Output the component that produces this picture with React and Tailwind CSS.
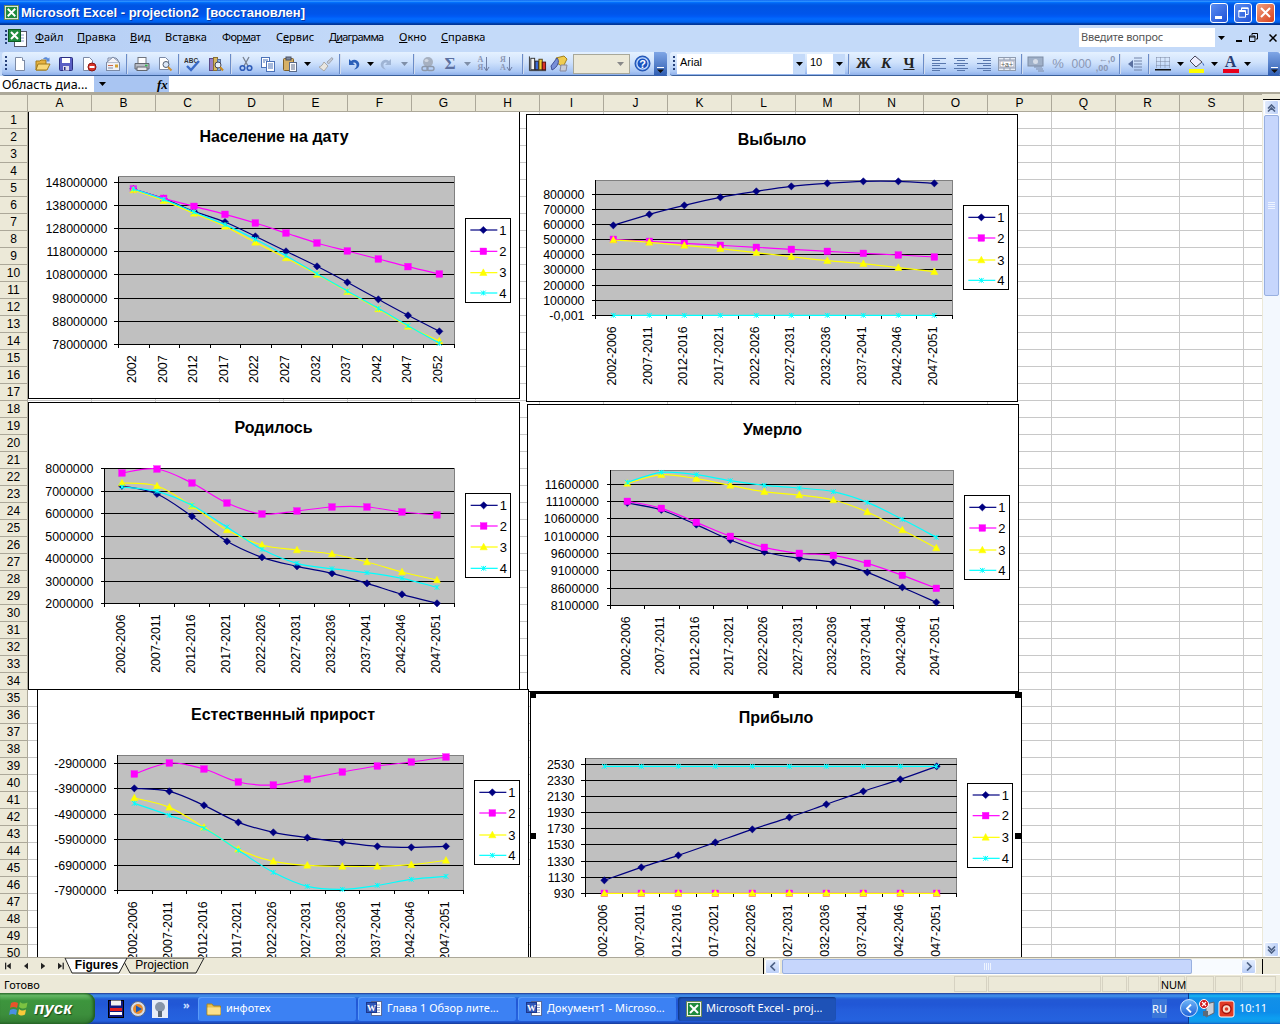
import React from "react";

const UI = "font-['Noto_Sans','DejaVu_Sans',sans-serif]";

function smooth(p) {
  let d = `M${p[0][0]} ${p[0][1]}`;
  for (let i = 0; i < p.length - 1; i++) {
    const a = p[i - 1] || p[i], b = p[i], c = p[i + 1], e = p[i + 2] || c;
    d += ` C${b[0] + (c[0] - a[0]) / 6} ${b[1] + (c[1] - a[1]) / 6} ${c[0] - (e[0] - b[0]) / 6} ${c[1] - (e[1] - b[1]) / 6} ${c[0]} ${c[1]}`;
  }
  return d;
}

function Marker({ k, x, y }) {
  if (k === 0) return <polygon points={`${x},${y - 3.6} ${x + 3.6},${y} ${x},${y + 3.6} ${x - 3.6},${y}`} fill="#000080" stroke="#000080" strokeWidth="0.5" />;
  if (k === 1) return <rect x={x - 3.3} y={y - 3.3} width="6.6" height="6.6" fill="#ff00ff" stroke="#ff00ff" strokeWidth="0.4" />;
  if (k === 2) return <polygon points={`${x},${y - 3.8} ${x + 3.6},${y + 2.8} ${x - 3.6},${y + 2.8}`} fill="#ffff00" stroke="#ffff00" strokeWidth="0.5" />;
  return <path d={`M${x - 2.4} ${y - 2.4}L${x + 2.4} ${y + 2.4}M${x + 2.4} ${y - 2.4}L${x - 2.4} ${y + 2.4}M${x} ${y - 2.4}V${y + 2.4}`} stroke="#00ffff" strokeWidth="1" fill="none" />;
}

const COL = ["#000080", "#ff00ff", "#ffff00", "#00ffff"];

function Chart({ className, px, py, ox, oy, title, titleX, titleY, plot, grid, labels, ticks, pts, series, legend, legendY, cats, labelRight }) {
  const X = (z) => ox + z / 3;
  const Y = (z) => oy + z / 3;
  const [x0, x1, y0, y1] = [X(plot[0]), X(plot[1]), Y(plot[2]), Y(plot[3])];
  const lx0 = X(legend[0]), lx1 = X(legend[1]), ly0 = Y(legend[2]), ly1 = Y(legend[3]);
  return (
    <div className={className}>
      <svg width="490" height="300" viewBox={`${px} ${py} 490 300`} className="block" fontFamily="'Liberation Sans',Arial,sans-serif">
        <text x={titleX} y={titleY} textAnchor="middle" fontSize="16" fontWeight="700" fill="#000">{title}</text>
        <rect x={x0} y={y0} width={x1 - x0} height={y1 - y0} fill="#c0c0c0" stroke="#808080" shapeRendering="crispEdges" />
        {grid.map((g, i) => (
          <g key={i} shapeRendering="crispEdges">
            <line x1={x0 - 4} x2={x1} y1={Y(g)} y2={Y(g)} stroke="#000" />
          </g>
        ))}
        <line x1={x0} x2={x0} y1={y0} y2={y1} stroke="#000" shapeRendering="crispEdges" />
        {ticks.map((t, i) => <line key={i} x1={X(t)} x2={X(t)} y1={y1} y2={y1 + 4} stroke="#000" shapeRendering="crispEdges" />)}
        {labels.map((l, i) => <text key={i} x={labelRight} y={Y(grid[i]) + 4.5} textAnchor="end" fontSize="12.4" fill="#000">{l}</text>)}
        {cats.map((c, i) => <text key={i} transform={`translate(${X(pts[i]) + 3} ${y1 + 11}) rotate(-90)`} textAnchor="end" fontSize="12.4" fill="#000">{c}</text>)}
        {series.map((s, k) => {
          const p = s.map((v, i) => [X(pts[i]), Y(v)]);
          return (
            <g key={k}>
              <path d={smooth(p)} fill="none" stroke={COL[k]} strokeWidth="1.2" />
              {p.map((q, i) => <Marker key={i} k={k} x={q[0]} y={q[1]} />)}
            </g>
          );
        })}
        <rect x={lx0} y={ly0} width={lx1 - lx0} height={ly1 - ly0} fill="#fff" stroke="#000" shapeRendering="crispEdges" />
        {legendY.map((z, k) => (
          <g key={k}>
            <line x1={lx0 + 5} x2={lx0 + 32} y1={Y(z)} y2={Y(z)} stroke={COL[k]} strokeWidth="1.2" />
            <Marker k={k} x={lx0 + 18} y={Y(z)} />
            <text x={lx0 + 34} y={Y(z) + 4.5} fontSize="13" fill="#000">{k + 1}</text>
          </g>
        ))}
      </svg>
    </div>
  );
}

const PER = ["2002-2006", "2007-2011", "2012-2016", "2017-2021", "2022-2026", "2027-2031", "2032-2036", "2037-2041", "2042-2046", "2047-2051"];
const YEARS = ["2002", "2007", "2012", "2017", "2022", "2027", "2032", "2037", "2042", "2047", "2052"];

const C1 = { px: 29, py: 111, ox: 20, oy: 110, title: "Население на дату", titleX: 274, titleY: 142, plot: [295, 1303, 200, 703], grid: [217, 286, 355, 424, 493, 565, 634, 703], labels: ["148000000", "138000000", "128000000", "118000000", "108000000", "98000000", "88000000", "78000000"], ticks: [296, 388, 478, 571, 661, 753, 844, 937, 1027, 1120, 1210, 1303], pts: [340, 431, 522, 615, 706, 798, 891, 982, 1075, 1164, 1258], series: [[237, 266, 304, 336, 379, 424, 469, 517, 568, 616, 664], [237, 265, 289, 313, 339, 369, 399, 423, 447, 470, 492], [240, 272, 310, 349, 397, 444, 493, 545, 597, 649, 693], [237, 268, 306, 344, 388, 437, 491, 543, 595, 647, 700]], legend: [1336, 1471, 326, 577], legendY: [360, 424, 488, 549], cats: YEARS, labelRight: 107.5 };
const C2 = { px: 527, py: 115, ox: 525, oy: 110, title: "Выбыло", titleX: 772, titleY: 145, plot: [212, 1282, 211, 616], grid: [253, 298, 343, 388, 433, 478, 526, 571, 616], labels: ["800000", "700000", "600000", "500000", "400000", "300000", "200000", "100000", "-0,001"], ticks: [212, 320, 424, 533, 641, 749, 854, 962, 1069, 1175, 1282], pts: [265, 373, 478, 586, 694, 799, 907, 1015, 1120, 1228], series: [[346, 313, 286, 262, 244, 229, 220, 214, 214, 220], [388, 394, 400, 406, 412, 418, 424, 430, 435, 441], [390, 397, 406, 416, 428, 440, 452, 461, 473, 485], [616, 616, 616, 616, 616, 616, 616, 616, 616, 616]], legend: [1315, 1450, 287, 538], legendY: [322, 384, 450, 511], cats: PER, labelRight: 584.5 };
const C3 = { px: 29, py: 403, ox: 25, oy: 400, title: "Родилось", titleX: 273.5, titleY: 433, plot: [239, 1288, 205, 610], grid: [205, 274, 340, 409, 475, 544, 610], labels: ["8000000", "7000000", "6000000", "5000000", "4000000", "3000000", "2000000"], ticks: [239, 343, 448, 553, 658, 763, 868, 973, 1078, 1183, 1288], pts: [291, 396, 501, 606, 711, 816, 921, 1026, 1131, 1236], series: [[258, 282, 349, 424, 472, 499, 520, 550, 583, 610], [219, 207, 249, 309, 342, 333, 321, 321, 336, 345], [249, 258, 318, 390, 435, 450, 462, 486, 516, 540], [261, 274, 316, 381, 448, 490, 506, 518, 535, 562]], legend: [1322, 1456, 281, 532], legendY: [316, 378, 441, 505], cats: PER, labelRight: 93.5 };
const C4 = { px: 528, py: 405, ox: 525, oy: 400, title: "Умерло", titleX: 772.5, titleY: 435, plot: [257, 1285, 211, 616], grid: [253, 304, 355, 409, 460, 511, 565, 616], labels: ["11600000", "11100000", "10600000", "10100000", "9600000", "9100000", "8600000", "8100000"], ticks: [257, 358, 464, 565, 667, 772, 874, 976, 1079, 1183, 1285], pts: [307, 409, 514, 616, 718, 823, 925, 1027, 1132, 1234], series: [[309, 330, 374, 420, 456, 475, 487, 517, 562, 607], [304, 325, 367, 409, 442, 460, 466, 490, 526, 565], [250, 224, 236, 256, 275, 285, 300, 336, 390, 444], [247, 217, 224, 242, 256, 264, 275, 307, 358, 412]], legend: [1318, 1453, 287, 538], legendY: [322, 384, 450, 511], cats: PER, labelRight: 599 };
const C5 = { px: 38, py: 690, ox: 30, oy: 685, title: "Естественный прирост", titleX: 283, titleY: 720, plot: [263, 1300, 211, 616], grid: [235, 310, 388, 463, 541, 616], labels: ["-2900000", "-3900000", "-4900000", "-5900000", "-6900000", "-7900000"], ticks: [263, 367, 469, 575, 676, 781, 885, 988, 1093, 1195, 1300], pts: [313, 418, 522, 625, 730, 832, 937, 1042, 1144, 1248], series: [[310, 319, 361, 412, 442, 458, 472, 484, 487, 484], [267, 234, 252, 291, 300, 282, 261, 243, 231, 216], [339, 367, 427, 493, 529, 541, 544, 544, 539, 526], [355, 391, 430, 496, 562, 604, 613, 601, 583, 574]], legend: [1333, 1468, 287, 538], legendY: [322, 384, 450, 511], cats: PER, labelRight: 106.5 };
const C6 = { px: 531, py: 694, ox: 520, oy: 680, title: "Прибыло", titleX: 776, titleY: 723, plot: [196, 1310, 235, 640], grid: [253, 301, 349, 397, 445, 493, 544, 592, 640], labels: ["2530", "2330", "2130", "1930", "1730", "1530", "1330", "1130", "930"], ticks: [196, 308, 418, 530, 640, 754, 866, 976, 1086, 1198, 1310], pts: [253, 364, 475, 586, 697, 808, 919, 1030, 1141, 1250], series: [[601, 562, 526, 487, 448, 412, 373, 334, 298, 259], [640, 640, 640, 640, 640, 640, 640, 640, 640, 640], [640, 640, 640, 640, 640, 640, 640, 640, 640, 640], [259, 259, 259, 259, 259, 259, 259, 259, 259, 259]], legend: [1343, 1477, 311, 562], legendY: [345, 407, 472, 535], cats: PER, labelRight: 574.5 };

/* ---------- icons ---------- */
const S = ({ children, w = 16, h = 16, vb }) => <svg width={w} height={h} viewBox={vb || `0 0 ${w} ${h}`}>{children}</svg>;
const Arrow = ({ c = "#000" }) => <svg width="7" height="4" viewBox="0 0 7 4"><polygon points="0,0 7,0 3.5,4" fill={c} /></svg>;
const Page = ({ x = 2, y = 1, w = 10, h = 14 }) => <path d={`M${x + .5} ${y + .5}H${x + w - 3.5}L${x + w - .5} ${y + 3.5}V${y + h - .5}H${x + .5}Z`} fill="#fff" stroke="#7c8aa5" />;
const INew = () => <S><Page x={3} /><path d="M10.5 1.5V4.5H13" fill="#dde6f5" stroke="#7c8aa5" /></S>;
const IOpen = () => <S><path d="M1 5H5L6 4H11V14H1Z" fill="#e6b23f" stroke="#a07a1c" /><path d="M3 8H15L12 14H1Z" fill="#f8d878" stroke="#a07a1c" /><path d="M8 3C9 1 12 0.5 13 2.5L14.5 1.5V5.5H11L12 4.4C11 3 9.5 3 8 3Z" fill="#5a8ad8" /></S>;
const ISave = () => <S><rect x="1.5" y="1.5" width="13" height="13" rx="1" fill="#5a5fc4" stroke="#2b2f80" /><rect x="4" y="2" width="8" height="5" fill="#fff" /><rect x="5" y="10" width="6" height="4.5" fill="#dcdcec" /><rect x="6" y="11" width="1.5" height="3" fill="#2b2f80" /></S>;
const IPerm = () => <S><Page x={2} w={10} /><circle cx="11" cy="11" r="4" fill="#d8342a" stroke="#8a1510" /><rect x="8.5" y="10" width="5" height="2" fill="#fff" /></S>;
const IMail = () => <S><path d="M3 6V2H11L13 4V6" fill="#f8f8ff" stroke="#7c8aa5" /><rect x="1.5" y="6.5" width="13" height="8" fill="#eef0f6" stroke="#7c8aa5" /><path d="M1.5 6.5L8 1L14.5 6.5" fill="#f4f4fa" stroke="#7c8aa5" /><rect x="3" y="9" width="5" height="1" fill="#d06a4a" /><rect x="3" y="11.5" width="5" height="1" fill="#7c8aa5" /><rect x="10" y="8.5" width="3" height="3" fill="#d4a030" /></S>;
const IPrint = () => <S><rect x="4" y="1.5" width="8" height="6" fill="#fff" stroke="#70757e" /><path d="M1 7.5H15V13H1Z" fill="#b9bdc6" stroke="#62666e" /><rect x="3" y="11" width="10" height="3.5" fill="#e8e8ec" stroke="#62666e" /><rect x="11" y="8.7" width="2.5" height="1.5" fill="#2fc04a" /></S>;
const IPreview = () => <S><Page x={2} w={10} h={13} /><circle cx="9" cy="8.5" r="3" fill="#dce8f8" stroke="#556070" /><path d="M11 11L14.5 14.5" stroke="#d09030" strokeWidth="2" /></S>;
const ISpell = () => <svg width="18" height="16" viewBox="0 0 18 16"><text x="0" y="6.5" fontSize="6.5" fontWeight="700" fontFamily="'Liberation Sans',sans-serif" fill="#333">ABC</text><path d="M3 10L7 14L15 5" fill="none" stroke="#3a6bc8" strokeWidth="2.4" /></svg>;
const IResearch = () => <S><rect x="1.5" y="2.5" width="4" height="12" fill="#9a82c8" stroke="#5a4a88" /><rect x="5.5" y="1.5" width="4" height="13" fill="#d8b860" stroke="#8a7030" /><rect x="9.5" y="3.5" width="3" height="11" fill="#8ab0e0" stroke="#5a7098" /><circle cx="10" cy="9" r="3" fill="#e8f0fa" stroke="#445" /><path d="M12 11L15 14.5" stroke="#c88a20" strokeWidth="2" /></S>;
const ICut = () => <S><path d="M5 1L10 10M11 1L6 10" stroke="#7a8290" strokeWidth="1.3" /><circle cx="4.5" cy="12" r="2.3" fill="none" stroke="#2f5cb8" strokeWidth="1.6" /><circle cx="11.5" cy="12" r="2.3" fill="none" stroke="#2f5cb8" strokeWidth="1.6" /></S>;
const ICopy = () => <S><rect x="1.5" y="1.5" width="8" height="10" fill="#fff" stroke="#4b72b8" /><rect x="6.5" y="5.5" width="8" height="10" fill="#fff" stroke="#4b72b8" /><path d="M8 8H13M8 10H13M8 12H13M3 4H8M3 6H5" stroke="#4b72b8" /></S>;
const IPaste = () => <S><rect x="1.5" y="2.5" width="10" height="12" rx="1" fill="#d6b066" stroke="#7e6028" /><rect x="4" y="1" width="5" height="3" fill="#7d8aa0" stroke="#4a5060" /><rect x="7.5" y="6.5" width="7" height="9" fill="#fff" stroke="#5a6a88" /><path d="M9 9H13M9 11H13M9 13H13" stroke="#5a6a88" /></S>;
const IBrush = () => <S><path d="M9 6L14 1.5L15 3L10.5 8Z" fill="#c6ccd6" stroke="#a0a6b2" /><path d="M6 6L10 10L6 15L1 11C3.5 10.5 5 8 6 6Z" fill="#e8e6e0" stroke="#a8a8a8" /></S>;
const IUndo = ({ c = "#2a5fb8" }) => <S><path d="M4 3V9H10L8 7C9.5 6 11 6.7 11.5 8.5C12 10.5 10.5 12.5 9 13.5C13 13 15 10 14 7C13 4 9 2.5 6 5Z" fill={c} /></S>;
const IRedo = () => <svg width="16" height="16" viewBox="0 0 16 16"><g transform="translate(16 0) scale(-1 1)"><path d="M4 3V9H10L8 7C9.5 6 11 6.7 11.5 8.5C12 10.5 10.5 12.5 9 13.5C13 13 15 10 14 7C13 4 9 2.5 6 5Z" fill="#9fb4d4" /></g></svg>;
const ILink = () => <S><circle cx="8" cy="6" r="5" fill="#a6b0c0" /><ellipse cx="6.5" cy="4.5" rx="2" ry="1.5" fill="#d0d6e0" /><rect x="2" y="10.5" width="6" height="4" rx="2" fill="none" stroke="#8d98aa" strokeWidth="1.4" /><rect x="7" y="10.5" width="7" height="4" rx="2" fill="none" stroke="#8d98aa" strokeWidth="1.4" /></S>;
const ISort = ({ a, b }) => (
  <div className="flex items-center">
    <div className="flex flex-col items-center font-['Liberation_Serif',serif] text-[8px] leading-[8px] font-bold text-[#8b96b4]"><span>{a}</span><span>{b}</span></div>
    <svg width="7" height="16" viewBox="0 0 7 16"><path d="M3.5 1V14M1 11L3.5 15L6 11" fill="none" stroke="#6f7ea3" /></svg>
  </div>
);
const IChart = () => <svg width="20" height="18" viewBox="0 0 20 18"><path d="M1.5 1V16H19" fill="none" stroke="#333" /><rect x="3" y="3" width="4" height="12" fill="#f4f4f4" stroke="#333" /><rect x="7.5" y="6" width="3.5" height="9" fill="#3a6ad8" stroke="#223" /><rect x="11.5" y="4" width="3.5" height="11" fill="#f0d030" stroke="#542" /><rect x="15" y="7" width="3.5" height="8" fill="#d8342a" stroke="#511" /></svg>;
const IDraw = () => <svg width="18" height="18" viewBox="0 0 18 18"><path d="M6 3L14 1L17 4L13 12L7 8Z" fill="#f0cc50" stroke="#a08020" /><path d="M7 3C10 6 8 12 2 15L1 11Z" fill="#7890d8" stroke="#405098" /><path d="M11 10L17 10L16 16L10 16Z" fill="#c8ccd8" stroke="#889" /></svg>;
const IHelp = () => <svg width="17" height="17" viewBox="0 0 17 17"><circle cx="8.5" cy="8.5" r="7.5" fill="#2f6fd8" stroke="#1c4aa8" /><circle cx="8.5" cy="8.5" r="5.6" fill="#1a52c0" stroke="#cfe0fb" strokeWidth="1.2" /><text x="8.5" y="12.5" textAnchor="middle" fontSize="11" fontWeight="700" fill="#fff" fontFamily="'Liberation Sans',sans-serif">?</text></svg>;
const Lines = ({ rows }) => <S>{rows.map((r, i) => <line key={i} x1={r[0]} x2={r[1]} y1={i * 2.4 + 2.5} y2={i * 2.4 + 2.5} stroke="#5877ad" shapeRendering="crispEdges" />)}</S>;
const IMerge = () => <svg width="18" height="16" viewBox="0 0 18 16"><rect x="0.5" y="1.5" width="17" height="13" fill="#e8eef8" stroke="#909cb0" /><rect x="2" y="5" width="14" height="6" fill="#fff" stroke="#aab" /><path d="M0 4H18M0 12H18M6 1V4M12 1V4M6 12V15M12 12V15" stroke="#909cb0" /><text x="9" y="10.5" textAnchor="middle" fontSize="7" fill="#555" fontFamily="'Liberation Sans',sans-serif">+a+</text></svg>;
const ICurr = () => <svg width="18" height="18" viewBox="0 0 18 18"><rect x="1" y="2" width="15" height="9" fill="#9fb0c8" stroke="#7e8da6" /><circle cx="8.5" cy="6.5" r="2.5" fill="#d6dde8" /><path d="M7 12H15M9 14H16M11 16H17" stroke="#7e8da6" /></svg>;
const IDec = () => <div className="flex flex-col font-['Liberation_Sans',sans-serif] text-[9px] leading-[9px] font-bold text-[#8a97b4]"><span className="pl-[3px]">←,0</span><span>,00</span></div>;
const IIndent = () => <svg width="16" height="16" viewBox="0 0 16 16"><path d="M7 2H15M7 5H15M7 8H15M7 11H15M7 14H15" stroke="#7284a8" /><path d="M1 8L6 4V12Z" fill="#5a70a0" /></svg>;
const IBorders = () => <svg width="16" height="16" viewBox="0 0 16 16"><path d="M1.5 1.5H14.5M1.5 5.5H14.5M1.5 9.5H14.5M1.5 1.5V12M5.5 1.5V12M10 1.5V12M14.5 1.5V12" stroke="#7a86a0" strokeDasharray="1 1" fill="none" /><rect x="0" y="13" width="16" height="1.5" fill="#111" /></svg>;
const IFill = () => <svg width="18" height="18" viewBox="0 0 18 18"><path d="M7 1L14 7L8 12L2 6Z" fill="#eef" stroke="#445" /><path d="M14 7C16 9 16.5 10 16 11C15 10 14.5 9 14 7Z" fill="#406ac0" /><rect x="1" y="14" width="15" height="4" fill="#ffff00" /></svg>;
const IFontColor = () => (
  <div className="flex flex-col items-center">
    <span className="font-['Liberation_Serif',serif] text-[16px] leading-[14px] font-bold text-[#2a3e74]">A</span>
    <span className="w-[16px] h-[4px] bg-[#e8001c]" />
  </div>
);
const IExcel = ({ s = 16 }) => <svg width={s} height={s} viewBox="0 0 16 16"><rect x="0.5" y="0.5" width="15" height="15" fill="#f4f4e8" stroke="#6a8a5a" /><rect x="2" y="2" width="12" height="12" fill="#1f8a3c" /><path d="M4 4L12 12M12 4L4 12" stroke="#fff" strokeWidth="2" /></svg>;
const IWord = () => <svg width="17" height="17" viewBox="0 0 17 17"><rect x="5.5" y="1.5" width="10" height="14" fill="#fff" stroke="#5a6a98" /><path d="M8 5H14M8 7.5H14M8 10H14M8 12.5H14" stroke="#8a9ac8" /><rect x="0.5" y="2.5" width="10" height="10" fill="#3056b8" stroke="#1c3688" /><text x="5.5" y="11" textAnchor="middle" fontSize="9" fontWeight="700" fill="#fff" fontFamily="'Liberation Serif',serif">W</text></svg>;
const IFolder = () => <svg width="16" height="16" viewBox="0 0 16 16"><path d="M1 3H6L7.5 5H14.5V14H1Z" fill="#e8c050" stroke="#a88420" /><path d="M1.5 6.5H14.5V13.5H1.5Z" fill="#fbe08c" /></svg>;
const Chevrons = ({ up }) => <svg width="9" height="8" viewBox="0 0 9 8">{up ? <path d="M1 4.5L4.5 1L8 4.5M1 7.5L4.5 4L8 7.5" fill="none" stroke="#4d6185" strokeWidth="1.6" /> : <path d="M1 .5L4.5 4L8 .5M1 3.5L4.5 7L8 3.5" fill="none" stroke="#4d6185" strokeWidth="1.6" />}</svg>;
const Grip = () => <div className="flex flex-col gap-[2px] h-[16px] items-center">{[0, 1, 2, 3].map((i) => <span key={i} className="w-[2px] h-[2px] bg-[#27417a]" />)}</div>;
const Sep = ({ c }) => <div className={`${c} h-[20px] flex justify-center items-center`}><span className="w-px h-[20px] bg-[#6a8cc8] border-r border-white/70 box-content" /></div>;
const B = ({ c, children }) => <div className={`${c} h-[24px] flex items-center justify-center shrink-0`}>{children}</div>;
const ChevBtn = ({ c }) => (
  <div className={`${c} h-[24px] flex flex-col items-center justify-end pb-[3px] rounded-r-[3px] bg-[linear-gradient(#7fa6e6,#2e5cb0)]`}>
    <svg width="7" height="6" viewBox="0 0 7 6"><rect x="0" y="0" width="7" height="1" fill="#fff" /><polygon points="0,2.5 7,2.5 3.5,6" fill="#111" /></svg>
  </div>
);

const toolbarBg = "bg-[linear-gradient(#e5f1ff,#cfe2fc_45%,#aac7f4_85%,#8fb0ea)] border-b border-[#3b619c]";

const MENU = [
  ["w-[42px]", "", "Ф", "айл"], ["w-[53px]", "", "П", "равка"], ["w-[35px]", "", "В", "ид"], ["w-[57px]", "Вст", "а", "вка"],
  ["w-[54px] tracking-[-0.6px]", "Фор", "м", "ат"], ["w-[53px]", "С", "е", "рвис"], ["w-[70px] tracking-[-0.8px]", "Д", "и", "аграмма"], ["w-[42px]", "", "О", "кно"], ["w-[60px]", "", "С", "правка"],
];

const COLS = "ABCDEFGHIJKLMNOPQRS".split("");

function Sheet() {
  return (
    <div className="relative h-[863px] flex overflow-hidden bg-white">
      <div className="w-[1262px] overflow-hidden">
        <div className="flex h-[18px] border-t border-[#aca899] bg-[#ece9d8] font-['Liberation_Sans',sans-serif] text-[12px] leading-[16px] text-black relative z-10">
          <div className="w-[28px] shrink-0 border-r border-b border-[#aca899]" />
          {COLS.map((c) => <div key={c} className="w-[64px] shrink-0 text-center border-r border-b border-[#aca899]">{c}</div>)}
          <div className="w-[18px] shrink-0 border-b border-[#aca899]" />
        </div>
        {Array.from({ length: 50 }, (_, r) => (
          <div key={r} className="flex h-[17px]">
            <div className="w-[28px] shrink-0 bg-[#ece9d8] border-r border-b border-[#aca899] text-center font-['Liberation_Sans',sans-serif] text-[12px] leading-[16px] text-black">{r + 1}</div>
            {COLS.map((c) => <div key={c} className="w-[64px] shrink-0 border-r border-b border-[#c8c8c8]" />)}
            <div className="w-[18px] shrink-0 border-b border-[#c8c8c8]" />
          </div>
        ))}
      </div>
      <Chart {...C1} className="absolute left-[28px] top-[17px] w-[492px] h-[288px] bg-white border border-t-0 border-black overflow-hidden" />
      <Chart {...C2} className="absolute left-[526px] top-[20px] w-[492px] h-[288px] bg-white border border-black overflow-hidden" />
      <Chart {...C3} className="absolute left-[28px] top-[308px] w-[492px] h-[288px] bg-white border border-black overflow-hidden" />
      <Chart {...C4} className="absolute left-[527px] top-[310px] w-[492px] h-[288px] bg-white border border-black overflow-hidden" />
      <Chart {...C5} className="absolute left-[37px] top-[595px] w-[492px] h-[288px] bg-white border border-black overflow-hidden" />
      <Chart {...C6} className="absolute left-[530px] top-[598px] w-[492px] h-[288px] bg-white border border-t-2 border-black overflow-hidden" />
      <span className="absolute left-[530px] top-[598px] w-[6px] h-[6px] bg-black" />
      <span className="absolute left-[773px] top-[598px] w-[6px] h-[6px] bg-black" />
      <span className="absolute left-[1015px] top-[598px] w-[6px] h-[6px] bg-black" />
      <span className="absolute left-[530px] top-[739px] w-[6px] h-[6px] bg-black" />
      <span className="absolute left-[1015px] top-[739px] w-[6px] h-[6px] bg-black" />
      {/* vertical scrollbar */}
      <div className="w-[18px] shrink-0 flex flex-col bg-[#f3f8fe] border-l border-[#ece9d8]">
        <div className="h-[6px] bg-[#ece9d8] border-b border-black" />
        <div className="h-[15px] mx-px rounded-[2px] border border-white bg-[linear-gradient(90deg,#e2ecfd,#bcd0f8)] flex items-center justify-center"><Chevrons up /></div>
        <div className="h-[181px] mx-px rounded-[2px] border border-[#98b0e0] bg-[#c6d6fc] flex items-center justify-center">
          <div className="flex flex-col gap-px">{[0, 1, 2, 3].map((i) => <span key={i} className="w-[7px] h-px bg-[#eef4ff]" />)}</div>
        </div>
        <div className="flex-1" />
        <div className="h-[15px] mx-px rounded-[2px] border border-white bg-[linear-gradient(90deg,#e2ecfd,#bcd0f8)] flex items-center justify-center"><Chevrons /></div>
      </div>
    </div>
  );
}

function Tabs() {
  return (
    <div className="h-[17px] flex bg-[#ece9d8] border-t border-[#aca899] relative">
      <div className="w-[64px] flex items-center gap-[10px] pl-[5px] shrink-0">
        <svg width="7" height="8" viewBox="0 0 7 8"><rect x="0" y="0" width="1.5" height="8" fill="#222" /><polygon points="7,0 7,8 2,4" fill="#222" /></svg>
        <svg width="5" height="8" viewBox="0 0 5 8" className="ml-[3px]"><polygon points="5,0 5,8 0,4" fill="#222" /></svg>
        <svg width="5" height="8" viewBox="0 0 5 8" className="ml-[3px]"><polygon points="0,0 0,8 5,4" fill="#222" /></svg>
        <svg width="7" height="8" viewBox="0 0 7 8" className="ml-[3px]"><rect x="5.5" y="0" width="1.5" height="8" fill="#222" /><polygon points="0,0 0,8 5,4" fill="#222" /></svg>
      </div>
      <svg width="150" height="17" viewBox="0 0 150 17" className="absolute left-[62px] top-0">
        <polygon points="60,0 78,0 142,0 134,15 68,15" fill="#ece9d8" stroke="#222" />
        <polygon points="3,0 65,0 57,15 10,15" fill="#fff" stroke="#222" />
      </svg>
      <div className="relative w-[60px] shrink-0 text-center font-['Liberation_Sans',sans-serif] text-[12px] leading-[15px] font-bold text-black pl-[5px]">Figures</div>
      <div className="relative w-[76px] shrink-0 text-center font-['Liberation_Sans',sans-serif] text-[12px] leading-[15px] text-black">Projection</div>
      <div className="flex-1" />
      <div className="w-[517px] flex items-center shrink-0 border-l border-black pl-px pr-[17px]">
        <div className="w-[15px] h-[15px] rounded-[2px] border border-white bg-[linear-gradient(#e2ecfd,#bcd0f8)] flex items-center justify-center">
          <svg width="6" height="9" viewBox="0 0 6 9"><path d="M5 .5L1 4.5L5 8.5" fill="none" stroke="#4d6185" strokeWidth="1.7" /></svg>
        </div>
        <div className="w-[410px] h-[15px] ml-[2px] rounded-[2px] border border-[#98b0e0] bg-[#c6d6fc] flex items-center justify-center gap-px">
          {[0, 1, 2, 3].map((i) => <span key={i} className="w-px h-[7px] bg-[#eef4ff]" />)}
        </div>
        <div className="flex-1 h-[15px] bg-[#f8fbff]" />
        <div className="w-[15px] h-[15px] rounded-[2px] border border-white bg-[linear-gradient(#e2ecfd,#bcd0f8)] flex items-center justify-center">
          <svg width="6" height="9" viewBox="0 0 6 9"><path d="M1 .5L5 4.5L1 8.5" fill="none" stroke="#4d6185" strokeWidth="1.7" /></svg>
        </div>
        <span className="ml-[6px] w-px h-[15px] bg-black" />
      </div>
    </div>
  );
}

function StatusBar() {
  return (
    <div className={`${UI} h-[19px] flex items-center bg-[#ece9d8] border-t border-white pl-[4px] text-[11px] text-black`}>
      <span className="w-[950px] mt-[3px]">Готово</span>
      <div className="flex gap-px font-['Liberation_Sans',sans-serif]">
        <span className="w-[33px] h-[16px] border border-[#d6d2c2]" />
        <span className="w-[113px] h-[16px] border border-[#d6d2c2]" />
        <span className="w-[25px] h-[16px] border border-[#d6d2c2]" />
        <span className="w-[31px] h-[16px] border border-[#d6d2c2]" />
        <span className="w-[25px] h-[16px] border border-[#d6d2c2] text-center leading-[16px]">NUM</span>
        <span className="w-[28px] h-[16px] border border-[#d6d2c2]" />
        <span className="w-[26px] h-[16px] border border-[#d6d2c2]" />
        <span className="w-[34px] h-[16px] border border-[#d6d2c2]" />
      </div>
    </div>
  );
}

function TaskBtn({ icon, label, active }) {
  return (
    <div className={`w-[158px] h-[24px] shrink-0 flex items-center gap-[4px] pl-[8px] rounded-[3px] text-[11px] text-white ${active ? "bg-[#1e52b7] shadow-[inset_1px_1px_2px_#0f3480]" : "bg-[#3c81f3] shadow-[inset_1px_1px_0_#5a9bf8]"}`}>
      {icon}
      <span className="truncate">{label}</span>
    </div>
  );
}

function Taskbar() {
  return (
    <div className={`${UI} h-[31px] flex items-center bg-[linear-gradient(#1f2f86_0,#3165c4_3%,#3682e5_6%,#4490e6_10%,#3883e5_12%,#2b71e0_15%,#2663da_18%,#235bd6_20%,#2258d5_23%,#2157d6_38%,#245ddb_54%,#2562df_86%,#245fdc_89%,#2158d4_92%,#1d4ec0_95%,#1941a5_98%)]`}>
      <div className="w-[95px] h-[31px] shrink-0 flex items-center pl-[9px] gap-[5px] rounded-r-[9px] bg-[linear-gradient(#3c813c,#64b864_8%,#3d953d_25%,#3c8e3c_70%,#347f34_92%,#2c6e2c)] shadow-[inset_-2px_0_3px_#1f5a1f]">
        <svg width="20" height="19" viewBox="0 0 20 19"><path d="M2 4C4.5 2.5 6.5 2.5 9 4L8 9C5.5 7.5 3.5 7.5 1 9Z" fill="#e8532b" /><path d="M11 3C13.5 5 15.5 5 18.5 3.5L17.5 8.5C15 10 13 10 10 8Z" fill="#7cc242" /><path d="M1 11C3.5 9.5 5.5 9.5 8 11L7 16C4.5 14.5 2.5 14.5 0 16Z" fill="#4a90e2" /><path d="M10 10C12.5 12 14.5 12 17 10.5L16 15.5C13.5 17 11.5 17 9 15Z" fill="#f8c93a" /></svg>
        <span className="font-['Liberation_Sans',sans-serif] text-[17px] leading-[20px] font-bold italic text-white [text-shadow:1px_1px_1px_#1a4a1a]">пуск</span>
      </div>
      <div className="w-[103px] shrink-0 flex items-center pl-[13px] gap-[6px]">
        <svg width="16" height="18" viewBox="0 0 16 18"><rect x="0.5" y="0.5" width="15" height="17" fill="#111a80" stroke="#000" /><rect x="3" y="0.5" width="10" height="5" fill="#f2f2f2" /><rect x="2" y="8" width="12" height="3" fill="#e02020" /><rect x="2" y="12" width="12" height="3" fill="#fff" /></svg>
        <svg width="16" height="16" viewBox="0 0 16 16"><circle cx="8" cy="8" r="7.5" fill="#d8dce4" stroke="#5a6a8a" /><circle cx="8" cy="8" r="5" fill="#e88a2a" /><polygon points="6,4.5 12,8 6,11.5" fill="#1c5ab8" /></svg>
        <svg width="16" height="18" viewBox="0 0 16 18"><rect width="16" height="18" fill="#e8eef8" /><circle cx="8" cy="7" r="5" fill="#8896a8" /><rect x="6" y="11" width="4" height="6" fill="#5c6a78" /></svg>
        <span className="text-[11px] leading-none text-[#cfe0ff] ml-[9px] -mt-[8px] font-bold">»</span>
      </div>
      <div className="flex gap-[2px]">
        <TaskBtn icon={<IFolder />} label="инфотех" />
        <TaskBtn icon={<IWord />} label="Глава 1 Обзор лите..." />
        <TaskBtn icon={<IWord />} label="Документ1 - Microso..." />
        <TaskBtn active icon={<IExcel />} label="Microsoft Excel - proj..." />
      </div>
      <div className="flex-1 flex justify-end pr-[21px]">
        <span className="w-[15px] h-[19px] bg-[#3a76d8] text-center text-[11px] leading-[19px] text-white">RU</span>
      </div>
      <div className="relative w-[92px] h-[31px] shrink-0 flex items-center pl-[8px] gap-[2px] border-l border-[#0d3a92] bg-[linear-gradient(#0c59b9,#139ee9_6%,#18b5f2_10%,#139beb_14%,#1290e8_19%,#0d8dea_63%,#0d9ff1_81%,#0f9eed_88%,#119be9_91%,#1392e2_94%,#137ed7_97%,#095bc9)]">
        <div className="absolute -left-[9px] top-[6px] w-[18px] h-[18px] rounded-full bg-[linear-gradient(#6eb4f7,#1f62d8)] border border-[#cfe4ff] flex items-center justify-center">
          <svg width="6" height="9" viewBox="0 0 6 9"><path d="M5 .5L1 4.5L5 8.5" fill="none" stroke="#fff" strokeWidth="1.8" /></svg>
        </div>
        <svg className="ml-[2px]" width="17" height="20" viewBox="0 0 17 20"><path d="M7 5L15 3V14L7 18Z" fill="#c9ced6" stroke="#5a6470" /><path d="M4 12H9V17H4Z" fill="#5d6a78" /><circle cx="5" cy="5" r="4.5" fill="#d0141a" stroke="#fff" /><path d="M3 3L7 7M7 3L3 7" stroke="#fff" strokeWidth="1.3" /></svg>
        <svg width="17" height="18" viewBox="0 0 17 18"><rect x="1" y="1" width="15" height="16" rx="2" fill="#e23a24" stroke="#fff" /><circle cx="8.5" cy="9" r="4.5" fill="#f8d8c8" stroke="#a8140c" strokeWidth="1.4" /><circle cx="8.5" cy="9" r="1.8" fill="#e23a24" /></svg>
        <span className="ml-[2px] text-[11px] text-white">10:11</span>
      </div>
    </div>
  );
}

export default function App() {
  return (
    <div className="w-[1280px] h-[1024px] flex flex-col overflow-hidden bg-white">
      {/* title bar */}
      <div className="h-[25px] shrink-0 flex items-center pl-[4px] pr-[4px] bg-[linear-gradient(#0058ee_0%,#3593ff_4%,#288eff_6%,#127dff_8%,#036ffc_10%,#0262ee_14%,#0057e5_20%,#0054e3_24%,#0055eb_56%,#005bf5_66%,#026afe_76%,#0062ef_86%,#0052d6_92%,#0040ab_94%,#003092_100%)]">
        <IExcel s={15} />
        <span className="ml-[2px] font-['Liberation_Sans',sans-serif] text-[13px] font-bold text-white [text-shadow:1px_1px_0_#0a3aa8] whitespace-pre">Microsoft Excel - projection2  [восстановлен]</span>
        <div className="flex-1" />
        <div className="w-[18px] h-[20px] rounded-[3px] border border-white bg-[linear-gradient(135deg,#5a8df0,#1f52d8)] flex items-end pb-[3px] pl-[4px]"><span className="w-[7px] h-[3px] bg-white" /></div>
        <div className="ml-[6px] w-[18px] h-[20px] rounded-[3px] border border-white bg-[linear-gradient(135deg,#5a8df0,#1f52d8)] flex items-center justify-center">
          <svg width="11" height="11" viewBox="0 0 11 11"><path d="M3.5 3V.8H10.2V7.5H8M.8 3.5H7.5V10.2H.8ZM.8 4.5H7.5M3.5 1.5H10.2" fill="none" stroke="#fff" /></svg>
        </div>
        <div className="ml-[4px] w-[19px] h-[20px] rounded-[3px] border border-white bg-[linear-gradient(135deg,#f0a080,#d8401c)] flex items-center justify-center">
          <svg width="11" height="11" viewBox="0 0 11 11"><path d="M1 1L10 10M10 1L1 10" stroke="#fff" strokeWidth="2" /></svg>
        </div>
        <div className="w-[1px]" />
      </div>

      {/* menu bar + help box */}
      <div className={`${UI} h-[27px] shrink-0 flex items-center pb-[2px] bg-[linear-gradient(90deg,#b4cdf4,#c4daf9_30%,#c4daf9)] text-[11px] text-black`}>
        <div className="w-[35px] shrink-0 flex items-center pl-[5px] gap-[1px]">
          <Grip />
          <svg width="19" height="19" viewBox="0 0 19 19"><rect x="6.5" y="3.5" width="12" height="15" fill="#fff" stroke="#556" /><path d="M9 7H16M9 10H16M9 13H16" stroke="#8a9ac8" /><rect x="0.5" y="1.5" width="12" height="12" fill="#1f8a3c" stroke="#0c5a20" /><path d="M3 4L10 11M10 4L3 11" stroke="#fff" strokeWidth="2" /></svg>
        </div>
        {MENU.map(([w, a, u, b]) => (
          <span key={u + b} className={`${w} shrink-0`}>{a}<span className="underline">{u}</span>{b}</span>
        ))}
        <div className="flex-1" />
        <div className="w-[148px] h-[19px] flex items-center bg-white text-[11px] tracking-[-0.2px] text-[#555] pl-[2px]">
          <span className="flex-1">Введите вопрос</span>
          <span className="w-[12px] h-[19px] bg-[#c4daf9] flex items-center justify-center"><Arrow /></span>
        </div>
        <div className="w-[53px] flex items-center pl-[9px] gap-[7px] shrink-0">
          <span className="w-[6px] h-[2px] bg-black mt-[6px]" />
          <svg width="9" height="9" viewBox="0 0 9 9"><path d="M3 2V.5H8.5V6H7M.5 3H6V8.5H.5ZM.5 4H6" fill="none" stroke="#000" /></svg>
          <svg className="ml-[4px]" width="8" height="8" viewBox="0 0 8 8"><path d="M.5 .5L7.5 7.5M7.5 .5L.5 7.5" stroke="#000" strokeWidth="1.5" /></svg>
        </div>
      </div>

      {/* toolbars */}
      <div className="h-[24px] shrink-0 flex bg-[#c4daf9] pl-[2px]">
        <div className={`w-[665px] shrink-0 flex items-center rounded-l-[3px] ${toolbarBg}`}>
          <B c="w-[7px]"><Grip /></B>
          <B c="w-[22px]"><INew /></B>
          <B c="w-[23px]"><IOpen /></B>
          <B c="w-[23px]"><ISave /></B>
          <B c="w-[24px]"><IPerm /></B>
          <B c="w-[23px]"><IMail /></B>
          <Sep c="w-[6px]" />
          <B c="w-[23px]"><IPrint /></B>
          <B c="w-[23px]"><IPreview /></B>
          <Sep c="w-[5px]" />
          <B c="w-[23px]"><ISpell /></B>
          <B c="w-[23px]"><IResearch /></B>
          <Sep c="w-[7px]" />
          <B c="w-[23px]"><ICut /></B>
          <B c="w-[22px]"><ICopy /></B>
          <B c="w-[22px]"><IPaste /></B>
          <B c="w-[12px]"><Arrow /></B>
          <B c="w-[25px]"><IBrush /></B>
          <Sep c="w-[4px]" />
          <B c="w-[22px]"><IUndo /></B>
          <B c="w-[12px]"><Arrow /></B>
          <B c="w-[22px]"><IRedo /></B>
          <B c="w-[12px]"><Arrow c="#7f8fa8" /></B>
          <Sep c="w-[8px]" />
          <B c="w-[20px]"><ILink /></B>
          <B c="w-[24px]"><span className="font-['Liberation_Serif',serif] text-[17px] leading-none font-bold text-[#5c70a0]">Σ</span></B>
          <B c="w-[11px]"><Arrow c="#7f8fa8" /></B>
          <B c="w-[22px]"><ISort a="А" b="Я" /></B>
          <B c="w-[23px]"><ISort a="Я" b="А" /></B>
          <Sep c="w-[10px]" />
          <B c="w-[19px]"><IChart /></B>
          <B c="w-[24px]"><IDraw /></B>
          <div className="w-[2px] shrink-0" />
          <div className="w-[57px] h-[20px] shrink-0 flex items-center justify-end pr-[5px] bg-[#ece9d8] border border-[#a8a89a]"><Arrow c="#888" /></div>
          <B c="w-[24px]"><IHelp /></B>
          <ChevBtn c="w-[13px] shrink-0" />
        </div>
        <div className="w-[3px] shrink-0" />
        <div className={`flex-1 flex items-center rounded-l-[3px] ${toolbarBg}`}>
          <B c="w-[7px]"><Grip /></B>
          <div className="w-[128px] h-[20px] shrink-0 flex items-center bg-white font-['Liberation_Sans',sans-serif] text-[11px] pl-[3px] text-black">
            <span className="flex-1 -mt-[2px]">Arial</span>
            <span className="w-[12px] h-[20px] bg-[#c4daf9] flex items-center justify-center"><Arrow /></span>
          </div>
          <div className="w-[2px] shrink-0" />
          <div className="w-[38px] h-[20px] shrink-0 flex items-center bg-white font-['Liberation_Sans',sans-serif] text-[11px] pl-[3px] text-black">
            <span className="flex-1 -mt-[2px]">10</span>
            <span className="w-[12px] h-[20px] bg-[#c4daf9] flex items-center justify-center"><Arrow /></span>
          </div>
          <Sep c="w-[8px]" />
          <B c="w-[21px]"><span className="font-['Liberation_Serif',serif] text-[15px] leading-none font-bold text-[#222]">Ж</span></B>
          <B c="w-[24px]"><span className="font-['Liberation_Serif',serif] text-[15px] leading-none font-bold italic text-[#222]">К</span></B>
          <B c="w-[22px]"><span className="font-['Liberation_Serif',serif] text-[15px] leading-none font-bold underline text-[#222]">Ч</span></B>
          <Sep c="w-[8px]" />
          <B c="w-[22px]"><Lines rows={[[1, 15], [1, 9], [1, 15], [1, 9], [1, 15], [1, 9]]} /></B>
          <B c="w-[22px]"><Lines rows={[[1, 15], [4, 12], [1, 15], [4, 12], [1, 15], [4, 12]]} /></B>
          <B c="w-[24px]"><Lines rows={[[1, 15], [7, 15], [1, 15], [7, 15], [1, 15], [7, 15]]} /></B>
          <B c="w-[22px]"><IMerge /></B>
          <Sep c="w-[7px]" />
          <B c="w-[22px]"><ICurr /></B>
          <B c="w-[22px]"><span className="font-['Liberation_Sans',sans-serif] text-[13px] leading-none text-[#8a97b4]">%</span></B>
          <B c="w-[25px]"><span className="font-['Liberation_Sans',sans-serif] text-[12px] leading-none text-[#8a97b4]">000</span></B>
          <B c="w-[23px]"><IDec /></B>
          <Sep c="w-[6px]" />
          <B c="w-[24px]"><IIndent /></B>
          <Sep c="w-[4px]" />
          <B c="w-[24px]"><IBorders /></B>
          <B c="w-[10px]"><Arrow /></B>
          <B c="w-[23px]"><IFill /></B>
          <B c="w-[12px]"><Arrow /></B>
          <B c="w-[21px]"><IFontColor /></B>
          <B c="w-[12px]"><Arrow /></B>
          <div className="flex-1" />
          <ChevBtn c="w-[12px] shrink-0" />
        </div>
      </div>

      {/* formula bar */}
      <div className="h-[18px] shrink-0 flex bg-white border-b-2 border-[#aca899]">
        <div className={`${UI} w-[94px] shrink-0 text-[12.5px] leading-[18px] pl-[2px] text-black`}>Область диа...</div>
        <div className="w-[75px] shrink-0 flex items-center bg-[#a9c5f2]">
          <span className="ml-[5px]"><Arrow /></span>
          <span className="ml-[51px] font-['Liberation_Serif',serif] text-[13px] leading-none italic font-bold text-black">fx</span>
        </div>
      </div>

      <Sheet />
      <Tabs />
      <StatusBar />
      <Taskbar />
    </div>
  );
}
